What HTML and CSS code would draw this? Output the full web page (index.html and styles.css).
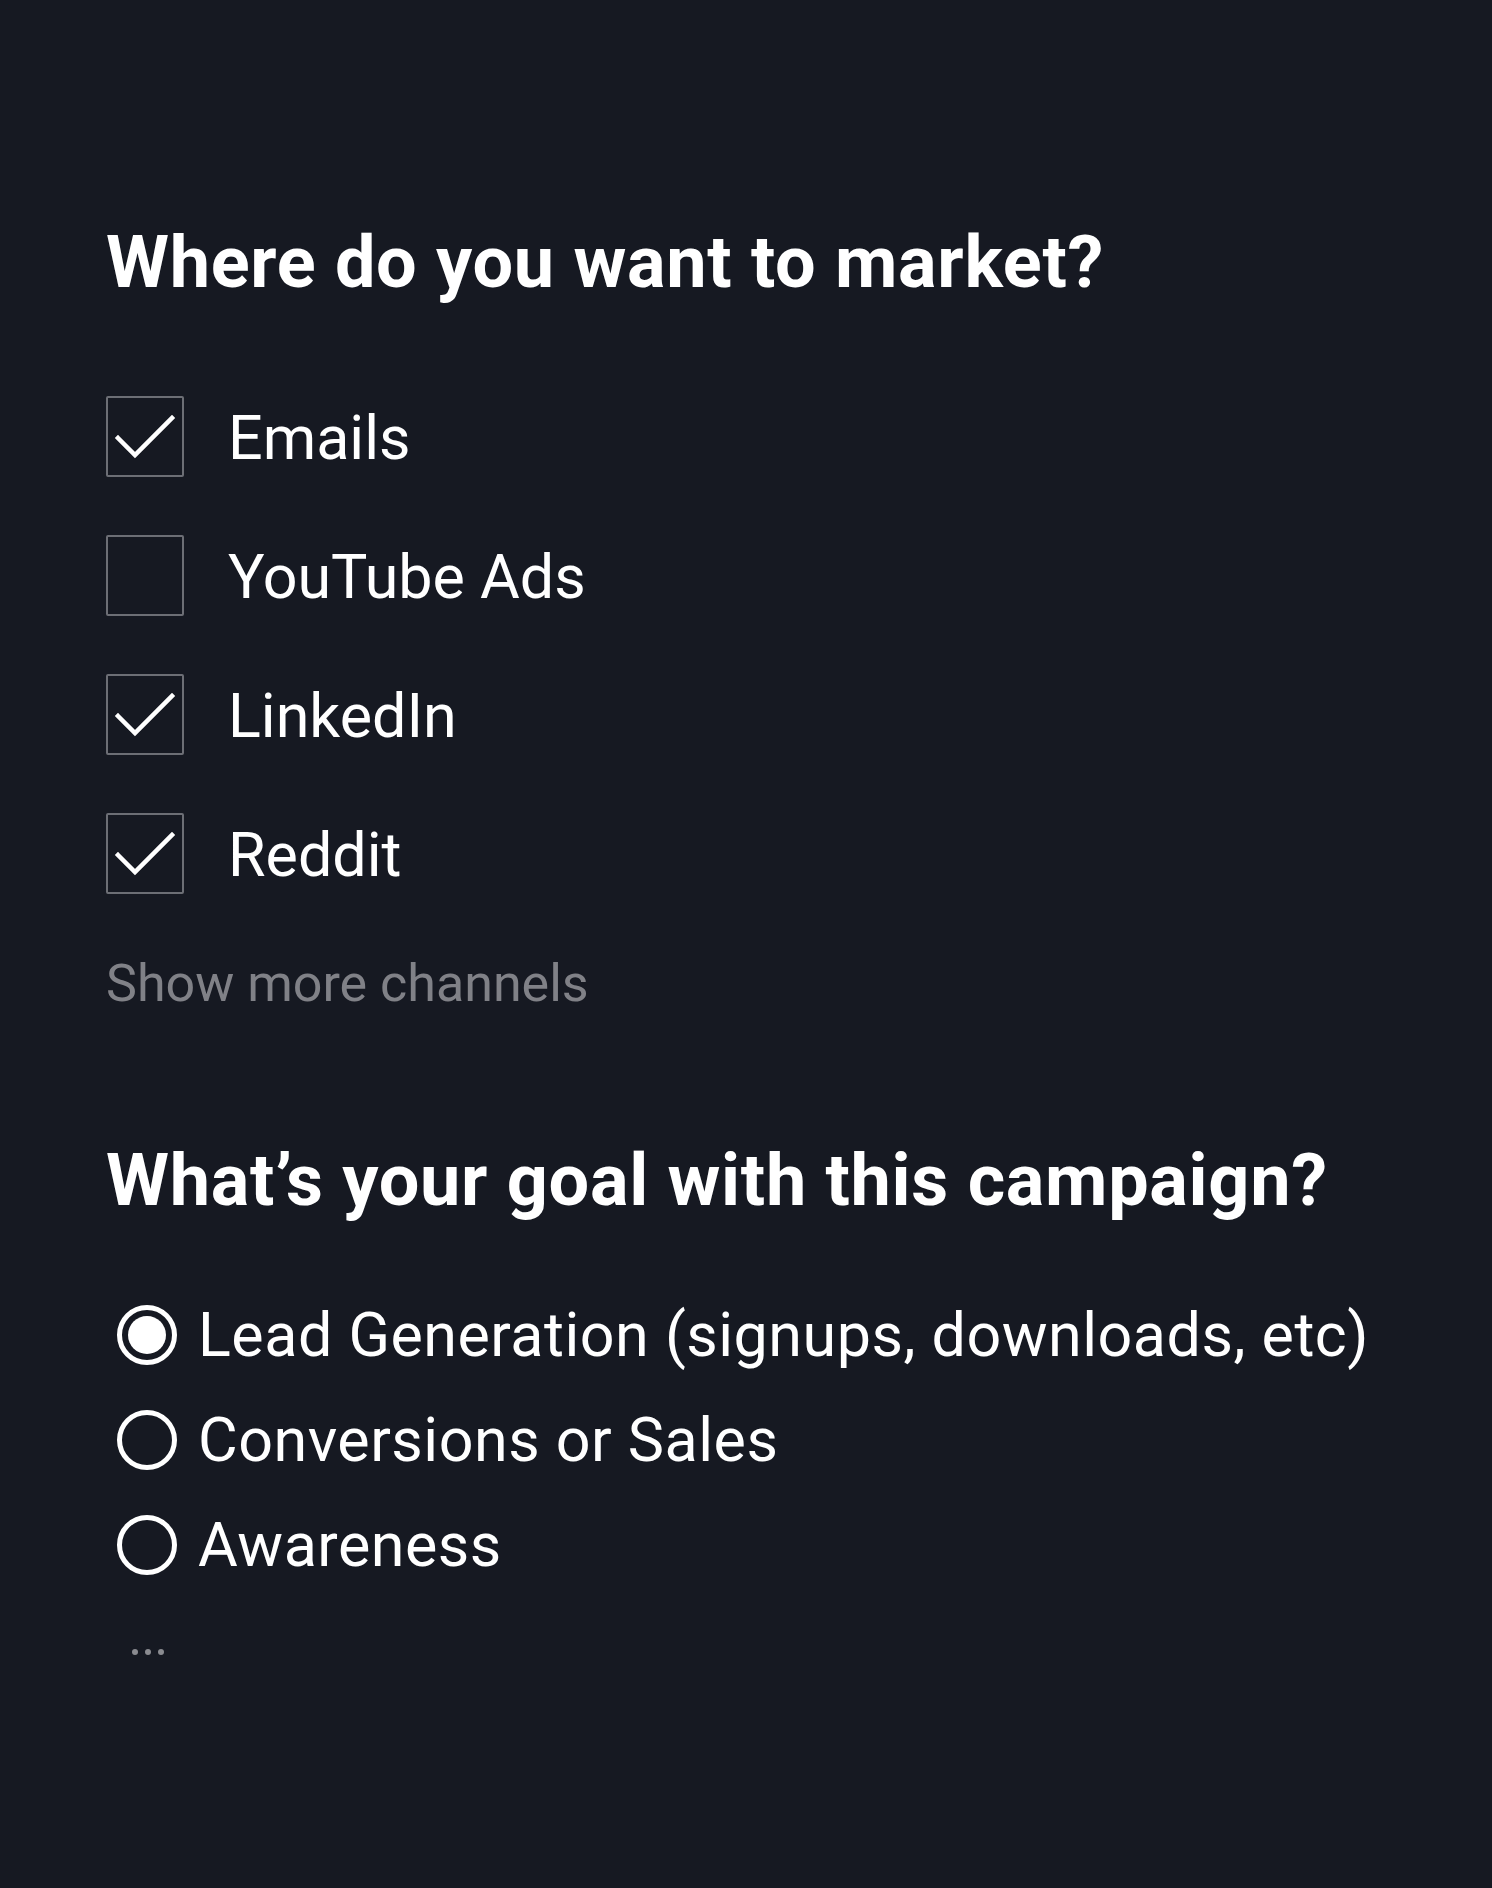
FILE: index.html
```html
<!DOCTYPE html>
<html lang="en">
<head>
<meta charset="utf-8">
<title>Campaign setup</title>
<link rel="stylesheet" href="styles.css">
</head>
<body>
<main class="page">
  <section class="block channels">
    <h1 class="title">Where do you want to market?</h1>
    <ul class="checklist">
      <li class="check-row">
        <span class="box"><svg class="tick" viewBox="0 0 78 81" width="78" height="81"><path d="M12 42 L29 59 L66 22" /></svg></span>
        <span class="label">Emails</span>
      </li>
      <li class="check-row">
        <span class="box"></span>
        <span class="label">YouTube Ads</span>
      </li>
      <li class="check-row">
        <span class="box"><svg class="tick" viewBox="0 0 78 81" width="78" height="81"><path d="M12 42 L29 59 L66 22" /></svg></span>
        <span class="label">LinkedIn</span>
      </li>
      <li class="check-row">
        <span class="box"><svg class="tick" viewBox="0 0 78 81" width="78" height="81"><path d="M12 42 L29 59 L66 22" /></svg></span>
        <span class="label">Reddit</span>
      </li>
    </ul>
    <p class="more">Show more channels</p>
  </section>
  <section class="block goals">
    <h2 class="title">What’s your goal with this campaign?</h2>
    <ul class="radiolist">
      <li class="radio-row"><span class="radio on"></span><span class="label">Lead Generation (signups, downloads, etc)</span></li>
      <li class="radio-row"><span class="radio"></span><span class="label">Conversions or Sales</span></li>
      <li class="radio-row"><span class="radio"></span><span class="label">Awareness</span></li>
    </ul>
    <div class="dots"><span></span><span></span><span></span></div>
  </section>
</main>
</body>
</html>
```

FILE: styles.css
```css
html, body {
  margin: 0;
  padding: 0;
  background: #161922;
}
body {
  font-family: Roboto, "Liberation Sans", sans-serif;
  color: #ffffff;
  min-height: 1888px;
}
.page {
  padding: 221px 0 0 106px;
}
.title {
  margin: 0;
  font-size: 72px;
  line-height: 84px;
  font-weight: 700;
  letter-spacing: 0.7px;
}
ul {
  list-style: none;
  margin: 0;
  padding: 0;
}
.checklist {
  margin-top: 91px;
  display: flex;
  flex-direction: column;
  gap: 58px;
}
.check-row {
  display: flex;
  align-items: center;
  gap: 44px;
  height: 81px;
}
.box {
  box-sizing: border-box;
  width: 78px;
  height: 81px;
  border: 2px solid #6c6e75;
  border-radius: 2px;
  position: relative;
  flex: none;
}
.tick {
  position: absolute;
  left: -2px;
  top: -2px;
}
.tick path {
  fill: none;
  stroke: #ffffff;
  stroke-width: 4.5;
  stroke-linecap: square;
}
.label {
  font-size: 61px;
  line-height: 81px;
  font-weight: 400;
  padding-top: 4px;
}
.more {
  margin: 55px 0 0;
  font-size: 52px;
  line-height: 70px;
  color: #808187;
}
.goals {
  margin-top: 120px;
}
.radiolist {
  margin-top: 82px;
  display: flex;
  flex-direction: column;
  gap: 45px;
}
.radio-row {
  display: flex;
  align-items: center;
  gap: 21px;
  height: 60px;
  padding-left: 11px;
}
.radio {
  box-sizing: border-box;
  width: 60px;
  height: 60px;
  border-radius: 50%;
  border: 5px solid #ffffff;
  flex: none;
  position: relative;
}
.radio.on::after {
  content: "";
  position: absolute;
  left: 6px;
  top: 6px;
  width: 38px;
  height: 38px;
  border-radius: 50%;
  background: #ffffff;
}
.radio-row .label {
  line-height: 60px;
  padding-top: 0;
  letter-spacing: 0.5px;
}
.dots {
  margin: 74px 0 0 26px;
  display: flex;
  gap: 7px;
}
.dots span {
  width: 6px;
  height: 6px;
  border-radius: 50%;
  background: #8a8b90;
}
```
